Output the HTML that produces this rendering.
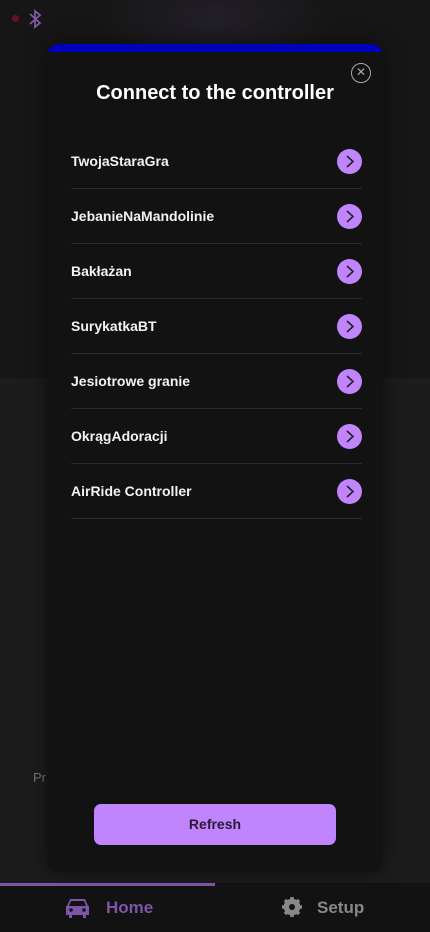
<!DOCTYPE html>
<html><head><meta charset="utf-8"><style>
*{margin:0;padding:0;box-sizing:border-box}
body{width:430px;height:932px;overflow:hidden;background:#1c1c1c;font-family:"Liberation Sans",sans-serif;position:relative}
.top{position:absolute;left:0;top:0;width:430px;height:378px;background:radial-gradient(ellipse 120px 60px at 215px 20px,#221f27,#161616)}
.modal{position:absolute;left:47px;top:44px;width:336px;height:828px;background:#121212;border-radius:12px;overflow:hidden;box-shadow:0 0 20px rgba(0,0,0,.5)}
.bar{height:8px;background:#0000b8}
h1{position:absolute;top:38px;left:0;width:100%;text-align:center;color:#fff;font-size:20px;font-weight:bold}
.close{position:absolute;left:304px;top:19px;width:20px;height:20px;border:1.3px solid #aaa;border-radius:50%;color:#aaa;font-size:12px;text-align:center;line-height:17px}
.row{position:absolute;left:24px;width:291px;height:55px;border-bottom:1px solid #2a2a2a;color:#f2f2f2;font-size:14px;font-weight:bold;line-height:55px}
.arr{position:absolute;right:0;top:15px;width:25px;height:25px;border-radius:50%;background:#c084fc;line-height:0}
.arr svg{display:block}
.btn{position:absolute;left:47px;top:760px;width:242px;height:41px;border-radius:7px;background:#c084fc;color:#2a1a35;font-weight:bold;font-size:14px;text-align:center;line-height:41px}
.nav{position:absolute;left:0;top:883px;width:430px;height:49px;background:#121212}
.ind{position:absolute;left:0;top:0;width:215px;height:3px;background:#7c55a6}
.nav span{position:absolute;top:15px;font-size:17px;font-weight:bold}
</style></head><body>
<div class="top"></div>
<div style="position:absolute;left:12px;top:15px;width:7px;height:7px;border-radius:50%;background:#6b0f25"></div>
<svg style="position:absolute;left:27px;top:9px" width="16" height="20" viewBox="0 0 16 20"><path d="M3 5l10 9-5 4V2l5 4-10 9" fill="none" stroke="#7d5a9e" stroke-width="1.8"/></svg>
<div style="position:absolute;left:33px;top:770px;color:#777;font-size:13px">Pr</div>
<div class="modal"><div class="bar"></div>
<div class="close">✕</div>
<h1>Connect to the controller</h1>
<div class="row" style="top:90px">TwojaStaraGra<div class="arr"><svg width="25" height="25"><path d="M10 7l6 5.5-6 5.5" fill="none" stroke="#222" stroke-width="1.6"/></svg></div></div>
<div class="row" style="top:145px">JebanieNaMandolinie<div class="arr"><svg width="25" height="25"><path d="M10 7l6 5.5-6 5.5" fill="none" stroke="#222" stroke-width="1.6"/></svg></div></div>
<div class="row" style="top:200px">Bakłażan<div class="arr"><svg width="25" height="25"><path d="M10 7l6 5.5-6 5.5" fill="none" stroke="#222" stroke-width="1.6"/></svg></div></div>
<div class="row" style="top:255px">SurykatkaBT<div class="arr"><svg width="25" height="25"><path d="M10 7l6 5.5-6 5.5" fill="none" stroke="#222" stroke-width="1.6"/></svg></div></div>
<div class="row" style="top:310px">Jesiotrowe granie<div class="arr"><svg width="25" height="25"><path d="M10 7l6 5.5-6 5.5" fill="none" stroke="#222" stroke-width="1.6"/></svg></div></div>
<div class="row" style="top:365px">OkrągAdoracji<div class="arr"><svg width="25" height="25"><path d="M10 7l6 5.5-6 5.5" fill="none" stroke="#222" stroke-width="1.6"/></svg></div></div>
<div class="row" style="top:420px">AirRide Controller<div class="arr"><svg width="25" height="25"><path d="M10 7l6 5.5-6 5.5" fill="none" stroke="#222" stroke-width="1.6"/></svg></div></div>
<div class="btn">Refresh</div>
</div>
<div class="nav"><div class="ind"></div>
<svg style="position:absolute;left:65px;top:14px" width="25" height="21" viewBox="0 0 25 21"><path d="M5 2h15l3 7h1v9h-3v3h-3v-3H7v3H4v-3H1V9h1z" fill="#7c55a6"/><path d="M6 4h13l2 5H4z" fill="#121212"/><circle cx="6" cy="13" r="1.8" fill="#121212"/><circle cx="19" cy="13" r="1.8" fill="#121212"/></svg>
<span style="left:106px;color:#7c55a6">Home</span>
<svg style="position:absolute;left:282px;top:14px" width="20" height="20" viewBox="0 0 20 20"><circle cx="10" cy="10" r="6.5" fill="none" stroke="#888" stroke-width="3.5"/><g stroke="#888" stroke-width="3.5"><path d="M10 0v20M0 10h20M3 3l14 14M17 3L3 17"/></g><circle cx="10" cy="10" r="6.8" fill="none" stroke="#888" stroke-width="2"/><circle cx="10" cy="10" r="3" fill="#121212"/></svg>
<span style="left:317px;color:#888">Setup</span>
</div>
</body></html>
